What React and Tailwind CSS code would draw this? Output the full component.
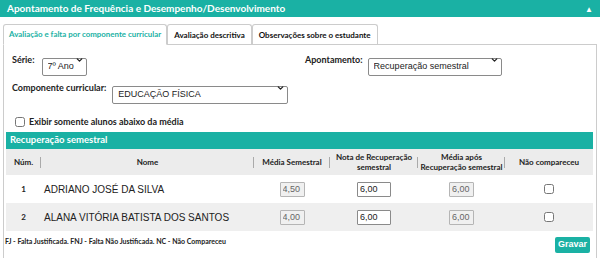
import React from "react";
import { ChevronDown } from "lucide-react";

const label = "font-['Lato','Open_Sans',sans-serif] font-bold text-[9px] text-[#222]";

function Select({ value, className }) {
  return (
    <div className={`relative ${className}`}>
      <select
        defaultValue={value}
        className="w-full h-full appearance-none bg-white border border-[#8a8a8a] rounded-[2px] pl-[5px] pr-[10px] text-[9px] text-[#222] font-['Liberation_Sans',Arial,sans-serif] outline-none"
      >
        <option>{value}</option>
      </select>
      <ChevronDown className="absolute right-[3px] top-1/2 -translate-y-1/2 w-[9px] h-[9px] text-[#222] pointer-events-none" strokeWidth={3.5} />
    </div>
  );
}

function NumInput({ value, disabled, width = "w-[25px]" }) {
  return (
    <input
      type="text"
      defaultValue={value}
      disabled={disabled}
      className={`${width} h-[15px] px-[2px] text-[9px] font-['Liberation_Sans',Arial,sans-serif] border ${
        disabled ? "bg-[#f0f0f0] border-[#b5b5b5] text-[#666]" : "bg-white border-[#8a8a8a] text-[#222]"
      } rounded-[1px] outline-none`}
    />
  );
}

const cols = "grid grid-cols-[35px_213px_76px_88px_87px_88px]";

const students = [
  { n: 1, name: "ADRIANO JOSÉ DA SILVA", media: "4,50", nota: "6,00", apos: "6,00" },
  { n: 2, name: "ALANA VITÓRIA BATISTA DOS SANTOS", media: "4,00", nota: "6,00", apos: "6,00" },
];

export default function App() {
  return (
    <div className="w-[600px] h-[258px] bg-white overflow-hidden font-['Lato',sans-serif]">
      {/* Header */}
      <div className="h-[17px] bg-[#1ab1a4] flex items-center justify-between pl-[7px] pr-[7px]">
        <span className="text-white font-bold text-[10px]">
          Apontamento de Frequência e Desempenho/Desenvolvimento
        </span>
        <span className="text-white text-[8px] leading-none">▲</span>
      </div>

      {/* Tabs */}
      <div className="flex items-end pl-[3px] mt-[7px] h-[20px]">
        <div className="h-[21px] px-[5px] flex items-center border border-[#ccc] border-b-white bg-white rounded-t-[3px] -mb-px relative z-10">
          <span className="text-[#1ab1a4] font-bold text-[7.9px]">Avaliação e falta por componente curricular</span>
        </div>
        <div className="h-[20px] px-[6px] flex items-center border border-[#ccc] border-b-0 rounded-t-[3px]">
          <span className="text-[#111] font-bold text-[8px]">Avaliação descritiva</span>
        </div>
        <div className="h-[20px] px-[6px] flex items-center border border-[#ccc] border-b-0 rounded-t-[3px]">
          <span className="text-[#111] font-bold text-[8px]">Observações sobre o estudante</span>
        </div>
      </div>

      {/* Panel */}
      <div className="mx-[3px] border border-[#ccc] border-b-0 h-[220px] flex flex-col">
        <div className="flex pt-[6px] pl-[8px] h-[24px]">
          <div className="w-[293px] flex items-center gap-[7px]">
            <span className={label}>Série:</span>
            <Select value="7º Ano" className="w-[45px] h-[18px]" />
          </div>
          <div className="flex items-center gap-[5px]">
            <span className={label}>Apontamento:</span>
            <Select value="Recuperação semestral" className="w-[134px] h-[18px]" />
          </div>
        </div>

        <div className="flex items-center gap-[6px] pl-[8px] mt-[10px] h-[18px]">
          <span className={label}>Componente curricular:</span>
          <Select value="EDUCAÇÃO FÍSICA" className="w-[176px] h-[18px]" />
        </div>

        <label className="flex items-center gap-[4px] pl-[11px] mt-[19px] h-[12px]">
          <input type="checkbox" className="w-[10px] h-[10px] m-0" />
          <span className={label}>Exibir somente alunos abaixo da média</span>
        </label>

        {/* Table */}
        <div className="ml-[2px] mr-[3px] mt-[4px]">
          <div className="h-[17px] bg-[#1ab1a4] flex items-center px-[4px]">
            <span className="text-white font-bold text-[9.5px]">Recuperação semestral</span>
          </div>
          <div className={`${cols} h-[26px] bg-[#ececec] text-[8px] font-bold text-[#222] leading-[10px]`}>
            {["Núm.", "Nome", "Média Semestral", "Nota de Recuperação semestral", "Média após Recuperação semestral", "Não compareceu"].map(
              (h, i) => (
                <div key={h} className="relative flex items-center justify-center text-center">
                  {h === "Nota de Recuperação semestral" ? (
                    <span>Nota de Recuperação<br />semestral</span>
                  ) : h === "Média após Recuperação semestral" ? (
                    <span>Média após<br />Recuperação semestral</span>
                  ) : (
                    <span>{h}</span>
                  )}
                  {i < 5 && <div className="absolute right-0 top-[8px] h-[11px] w-px bg-[#aaa]" />}
                </div>
              )
            )}
          </div>
          {students.map((s, i) => (
            <div key={s.n} className={`${cols} h-[28px] ${i % 2 ? "bg-[#efefef]" : "bg-white"}`}>
              <div className="flex items-center justify-center text-[8px] font-bold text-[#222]">{s.n}</div>
              <div className="flex items-center pl-[3px] text-[10px] text-[#222] font-['Liberation_Sans',Arial,sans-serif]">
                {s.name}
              </div>
              <div className="flex items-center justify-center">
                <NumInput value={s.media} disabled />
              </div>
              <div className="flex items-center justify-center">
                <NumInput value={s.nota} width="w-[34px]" />
              </div>
              <div className="flex items-center justify-center">
                <NumInput value={s.apos} disabled />
              </div>
              <div className="flex items-center justify-center">
                <input type="checkbox" className="w-[10px] h-[10px] m-0" />
              </div>
            </div>
          ))}
        </div>

        <div className="flex items-start justify-between pr-[6px] mt-[5px]">
          <span className="text-[7px] font-bold text-[#222] leading-[10px] pl-px">
            FJ - Falta Justificada. FNJ - Falta Não Justificada. NC - Não Compareceu
          </span>
          <button className="h-[16px] px-[3px] mt-[1px] bg-[#1ab1a4] text-white text-[9px] font-bold rounded-[2px] font-['Liberation_Sans',Arial,sans-serif]">
            Gravar
          </button>
        </div>
      </div>
    </div>
  );
}
